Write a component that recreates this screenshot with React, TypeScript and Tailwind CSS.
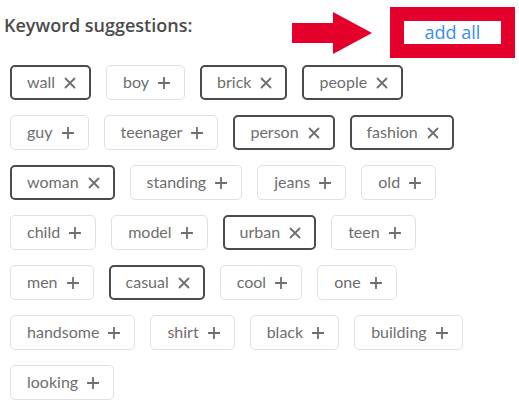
import React from "react";

type Keyword = { label: string; picked: boolean };

const rows: Keyword[][] = [
  [
    { label: "wall", picked: true },
    { label: "boy", picked: false },
    { label: "brick", picked: true },
    { label: "people", picked: true },
  ],
  [
    { label: "guy", picked: false },
    { label: "teenager", picked: false },
    { label: "person", picked: true },
    { label: "fashion", picked: true },
  ],
  [
    { label: "woman", picked: true },
    { label: "standing", picked: false },
    { label: "jeans", picked: false },
    { label: "old", picked: false },
  ],
  [
    { label: "child", picked: false },
    { label: "model", picked: false },
    { label: "urban", picked: true },
    { label: "teen", picked: false },
  ],
  [
    { label: "men", picked: false },
    { label: "casual", picked: true },
    { label: "cool", picked: false },
    { label: "one", picked: false },
  ],
  [
    { label: "handsome", picked: false },
    { label: "shirt", picked: false },
    { label: "black", picked: false },
    { label: "building", picked: false },
  ],
  [{ label: "looking", picked: false }],
];

function CrossIcon() {
  return (
    <svg width="12" height="12" viewBox="0 0 12 12" className="shrink-0">
      <path d="M1.5 1.5 L10.5 10.5 M10.5 1.5 L1.5 10.5" stroke="#6e6e6e" strokeWidth="1.8" strokeLinecap="round" fill="none" />
    </svg>
  );
}

function PlusIcon() {
  return (
    <svg width="12" height="12" viewBox="0 0 12 12" className="shrink-0">
      <path d="M6 0.5 V11.5 M0.5 6 H11.5" stroke="#6e6e6e" strokeWidth="1.8" strokeLinecap="round" fill="none" />
    </svg>
  );
}

function Tag({ label, picked }: Keyword) {
  return (
    <button
      type="button"
      className={
        picked
          ? "flex h-[35px] items-center gap-[9px] rounded-[5px] border-2 border-[#4b4b4b] bg-white pl-[15px] pr-[13px] font-['Lato',sans-serif] text-[16px] text-[#6e6e6e]"
          : "flex h-[35px] items-center gap-[9px] rounded-[5px] border border-[#e1e1e1] bg-white pl-[16px] pr-[14px] font-['Lato',sans-serif] text-[16px] text-[#6e6e6e]"
      }
    >
      <span className="leading-none pb-[1px]">{label}</span>
      {picked ? <CrossIcon /> : <PlusIcon />}
    </button>
  );
}

function Arrow() {
  return (
    <svg width="80" height="42" viewBox="0 0 80 42" className="shrink-0">
      <polygon points="0,11 41,11 41,0 80,21 41,42 41,31 0,31" fill="#e4002b" />
    </svg>
  );
}

export default function App() {
  return (
    <div
      className="h-[411px] w-[519px] overflow-hidden bg-white"
      style={{ fontFamily: '"Open Sans", "Noto Sans", sans-serif' }}
    >
      <div className="flex h-[58px] items-start">
        <h2 className="ml-[4px] mt-[13px] text-[18px] font-semibold leading-[24px] text-[#4b4b4b]">
          Keyword suggestions:
        </h2>
        <div className="ml-auto mt-[12px]">
          <Arrow />
        </div>
        <div className="ml-[18px] mr-[4px] mt-[7px] border-[14px] border-[#e4002b]">
          <div className="flex h-[23px] w-[97px] items-center justify-center bg-white text-[18px] leading-none text-[#378ef0]">
            <span className="pb-[2px]">add all</span>
          </div>
        </div>
      </div>
      <div className="mt-[7px] flex flex-col gap-[15px] pl-[10px]">
        {rows.map((row, i) => (
          <div key={i} className="flex gap-[15px]">
            {row.map((k) => (
              <Tag key={k.label} {...k} />
            ))}
          </div>
        ))}
      </div>
    </div>
  );
}
